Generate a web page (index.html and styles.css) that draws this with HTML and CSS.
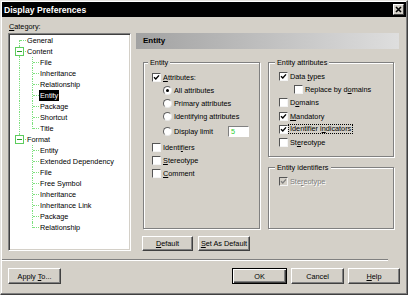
FILE: index.html
```html
<!DOCTYPE html>
<html>
<head>
<meta charset="utf-8">
<title>Display Preferences</title>
<link rel="stylesheet" href="styles.css">
</head>
<body>
<div class="window">
  <div class="titlebar">
    <span class="title">Display Preferences</span>
    <span class="close"><svg width="7" height="7" viewBox="0 0 7 7"><path d="M1 1L6 6M6 1L1 6" stroke="#000" stroke-width="1.6"/></svg></span>
  </div>
  <div class="main">
    <div class="left">
      <div class="label"><u>C</u>ategory:</div>
      <div class="tree">
        <div class="row"><span class="cell first"></span><span class="t">General</span></div>
        <div class="row"><span class="cell tee"><span class="exp"></span></span><span class="t">Content</span></div>
        <div class="row"><span class="cell pipe"></span><span class="cell tee"></span><span class="t">File</span></div>
        <div class="row"><span class="cell pipe"></span><span class="cell tee"></span><span class="t">Inheritance</span></div>
        <div class="row"><span class="cell pipe"></span><span class="cell tee"></span><span class="t">Relationship</span></div>
        <div class="row"><span class="cell pipe"></span><span class="cell tee"></span><span class="t sel">Entity</span></div>
        <div class="row"><span class="cell pipe"></span><span class="cell tee"></span><span class="t">Package</span></div>
        <div class="row"><span class="cell pipe"></span><span class="cell tee"></span><span class="t">Shortcut</span></div>
        <div class="row"><span class="cell pipe"></span><span class="cell elbow"></span><span class="t">Title</span></div>
        <div class="row"><span class="cell elbow"><span class="exp"></span></span><span class="t">Format</span></div>
        <div class="row"><span class="cell"></span><span class="cell tee"></span><span class="t">Entity</span></div>
        <div class="row"><span class="cell"></span><span class="cell tee"></span><span class="t">Extended Dependency</span></div>
        <div class="row"><span class="cell"></span><span class="cell tee"></span><span class="t">File</span></div>
        <div class="row"><span class="cell"></span><span class="cell tee"></span><span class="t">Free Symbol</span></div>
        <div class="row"><span class="cell"></span><span class="cell tee"></span><span class="t">Inheritance</span></div>
        <div class="row"><span class="cell"></span><span class="cell tee"></span><span class="t">Inheritance Link</span></div>
        <div class="row"><span class="cell"></span><span class="cell tee"></span><span class="t">Package</span></div>
        <div class="row"><span class="cell"></span><span class="cell elbow"></span><span class="t">Relationship</span></div>
      </div>
    </div>
    <div class="right">
      <div class="header">Entity</div>
      <div class="groups">
        <div class="group g-entity">
          <div class="legend lg-entity">Entity</div>
          <div class="rows rows-entity">
            <div class="opt lvl1"><span class="cb"><svg width="7" height="7" viewBox="0 0 7 7"><path d="M1 3.2L2.8 5L6 1.4" fill="none" stroke="#000" stroke-width="1.4"/></svg></span><span><u>A</u>ttributes:</span></div>
            <div class="opt lvl2"><span class="rb on"></span><span>All attributes</span></div>
            <div class="opt lvl2"><span class="rb"></span><span>Primary attributes</span></div>
            <div class="opt lvl2"><span class="rb"></span><span>Identifying attributes</span></div>
            <div class="opt lvl2 tall"><span class="rb"></span><span class="dl">Display limit</span><span class="tb">5</span></div>
            <div class="opt lvl1"><span class="cb"></span><span>Identi<u>f</u>iers</span></div>
            <div class="opt lvl1"><span class="cb"></span><span><u>S</u>tereotype</span></div>
            <div class="opt lvl1"><span class="cb"></span><span><u>C</u>omment</span></div>
          </div>
        </div>
        <div class="col2">
          <div class="group g-attr">
            <div class="legend lg-attr">Entity attributes</div>
            <div class="rows rows-attr">
              <div class="opt a1"><span class="cb"><svg width="7" height="7" viewBox="0 0 7 7"><path d="M1 3.2L2.8 5L6 1.4" fill="none" stroke="#000" stroke-width="1.4"/></svg></span><span>Data <u>t</u>ypes</span></div>
              <div class="opt a2"><span class="cb"></span><span>Replace by d<u>o</u>mains</span></div>
              <div class="opt a1"><span class="cb"></span><span>D<u>o</u>mains</span></div>
              <div class="opt a1"><span class="cb"><svg width="7" height="7" viewBox="0 0 7 7"><path d="M1 3.2L2.8 5L6 1.4" fill="none" stroke="#000" stroke-width="1.4"/></svg></span><span><u>M</u>andatory</span></div>
              <div class="opt a1"><span class="cb"><svg width="7" height="7" viewBox="0 0 7 7"><path d="M1 3.2L2.8 5L6 1.4" fill="none" stroke="#000" stroke-width="1.4"/></svg></span><span class="focus">Identifier i<u>n</u>dicators</span></div>
              <div class="opt a1"><span class="cb"></span><span>St<u>e</u>reotype</span></div>
            </div>
          </div>
          <div class="group g-ident">
            <div class="legend lg-attr">Entity identifiers</div>
            <div class="rows rows-ident">
              <div class="opt a1 disabled"><span class="cb dis"><svg width="7" height="7" viewBox="0 0 7 7"><path d="M1 3.2L2.8 5L6 1.4" fill="none" stroke="#808080" stroke-width="1.4"/></svg></span><span>Ste<u>r</u>eotype</span></div>
            </div>
          </div>
        </div>
      </div>
      <div class="btnrow">
        <button class="btn b-default"><span><u>D</u>efault</span></button>
        <button class="btn b-setdef"><span><u>S</u>et As Default</span></button>
      </div>
    </div>
  </div>
  <div class="sep"></div>
  <div class="footer">
    <button class="btn b-apply"><span>Apply <u>T</u>o...</span></button>
    <div class="spacer"></div>
    <button class="btn b-ok"><span>OK</span></button>
    <button class="btn b-cancel"><span>Cancel</span></button>
    <button class="btn b-help"><span><u>H</u>elp</span></button>
  </div>
</div>
</body>
</html>
```

FILE: styles.css
```css
* { box-sizing: border-box; }
html, body { margin: 0; padding: 0; }
body {
  width: 408px;
  height: 295px;
  overflow: hidden;
  background: #d4d0c8;
  font-family: "Liberation Sans", Arial, sans-serif;
  font-size: 7.3px;
  color: #000;
}
u { text-decoration: underline; text-underline-offset: 1px; }

.window {
  width: 408px;
  height: 295px;
  border: 1px solid;
  border-color: #e4e2de #404040 #404040 #e4e2de;
  box-shadow: inset -1px -1px 0 #808080, inset 1px 1px 0 #fff;
  padding: 1px;
  background: #d4d0c8;
  display: flex;
  flex-direction: column;
}

.titlebar {
  height: 15px;
  flex: none;
  background: #000;
  color: #fff;
  display: flex;
  align-items: center;
  justify-content: space-between;
  padding: 0 2px;
}
.title { font-weight: bold; font-size: 8.6px; }
.close {
  width: 11px;
  height: 11px;
  background: #d4d0c8;
  border: 1px solid;
  border-color: #fff #404040 #404040 #fff;
  display: flex;
  align-items: center;
  justify-content: center;
}
.close svg { display: block; }

.main {
  height: 234px;
  flex: none;
  display: flex;
}

.left {
  margin-left: 6px;
  width: 123px;
  display: flex;
  flex-direction: column;
}
.label {
  margin-top: 4px;
  height: 11px;
  line-height: 11px;
  padding-left: 1px;
}
.tree {
  margin-top: 1px;
  height: 218px;
  background: #fff;
  border: 1px solid;
  border-color: #808080 #fff #fff #808080;
  box-shadow: inset 1px 1px 0 #404040, inset -1px -1px 0 #d4d0c8;
  padding: 1px;
}
.row {
  display: flex;
  height: 11px;
  line-height: 11px;
  padding-left: 4px;
  white-space: nowrap;
}
.cell {
  width: 13px;
  height: 11px;
  flex: none;
  position: relative;
}
.cell.pipe::before, .cell.tee::before, .cell.elbow::before, .cell.first::before {
  content: "";
  position: absolute;
  left: 5px;
  top: 0;
  bottom: 0;
  border-left: 1px dotted #7ee07e;
}
.cell.elbow::before { bottom: 5px; }
.cell.first::before { top: 5px; }
.cell.tee::after, .cell.elbow::after, .cell.first::after {
  content: "";
  position: absolute;
  left: 6px;
  top: 5px;
  width: 6px;
  border-top: 1px dotted #7ee07e;
}
.exp {
  position: absolute;
  left: 1px;
  top: 1px;
  width: 9px;
  height: 9px;
  border: 1px solid #5ccc5c;
  background: #fff;
  z-index: 1;
}
.exp::after {
  content: "";
  position: absolute;
  left: 1px;
  top: 3px;
  width: 5px;
  height: 1px;
  background: #2a9a2a;
}
.t {
  margin-left: -1px;
  padding: 0 1px;
  height: 11px;
}
.t.sel { background: #000; color: #fff; }

.right {
  margin-left: 5px;
  width: 263px;
  padding-top: 16px;
  display: flex;
  flex-direction: column;
}
.header {
  height: 16px;
  line-height: 16px;
  padding-left: 7px;
  font-weight: bold;
  font-size: 8px;
  background: linear-gradient(to right, #a2a2a2, #dedede);
}
.groups {
  margin-top: 13px;
  display: flex;
  padding-left: 7px;
  gap: 8px;
}
.group {
  border: 1px solid #808080;
  box-shadow: inset 1px 1px 0 #fff, 1px 1px 0 #fff;
  display: flex;
  flex-direction: column;
}
.legend {
  align-self: flex-start;
  margin-top: -6px;
  height: 11px;
  line-height: 11px;
  padding: 0 2px;
  background: #d4d0c8;
  white-space: nowrap;
}
.lg-entity { margin-left: 4px; }
.lg-attr { margin-left: 6px; }
.g-entity { width: 117px; height: 167px; }
.col2 { width: 126px; display: flex; flex-direction: column; }
.g-attr { height: 95px; }
.g-ident { margin-top: 10px; height: 62px; }

.rows-entity { padding-top: 2.5px; }
.rows-attr { padding-top: 1.4px; }
.rows-ident { padding-top: 1.5px; }

.opt {
  display: flex;
  align-items: center;
  height: 13px;
  white-space: nowrap;
}
.rows-attr .opt { height: 13.33px; }
.opt.tall { height: 18px; }
.lvl1 { padding-left: 8px; }
.lvl2 { padding-left: 19px; }
.a1 { padding-left: 10px; }
.a2 { padding-left: 25px; }

.cb {
  width: 9px;
  height: 9px;
  flex: none;
  margin-right: 2px;
  background: #fff;
  border: 1px solid;
  border-color: #555 #f4f4f4 #f4f4f4 #555;
  display: flex;
  align-items: center;
  justify-content: center;
}
.cb svg { display: block; }
.cb.dis { background: #d4d0c8; }
.rb {
  width: 9px;
  height: 9px;
  flex: none;
  margin-right: 2px;
  border-radius: 50%;
  background: #fff;
  border: 1px solid;
  border-color: #606060 #e8e8e8 #e8e8e8 #606060;
  display: flex;
  align-items: center;
  justify-content: center;
}
.rb.on::after {
  content: "";
  width: 3px;
  height: 3px;
  border-radius: 50%;
  background: #000;
}
.dl { width: 54px; }
.tb {
  width: 21px;
  height: 11px;
  line-height: 9px;
  background: #fff;
  border: 1px solid;
  border-color: #808080 #fff #fff #808080;
  padding-left: 2px;
  color: #2fd02f;
}
.focus {
  border: 1px dotted #000;
  padding: 0 1px;
  margin-left: -2px;
  line-height: 8px;
}
.disabled { color: #808080; text-shadow: 1px 1px 0 #fff; }

.btnrow {
  margin-top: 7px;
  padding-left: 6px;
  display: flex;
  gap: 5px;
}
.btn {
  height: 15px;
  padding: 0;
  margin: 0;
  font: inherit;
  color: #000;
  background: #d4d0c8;
  border: 1px solid;
  border-color: #fff #404040 #404040 #fff;
  box-shadow: inset -1px -1px 0 #808080;
  display: flex;
  align-items: center;
  justify-content: center;
  white-space: nowrap;
}
.b-default { width: 51px; }
.b-setdef { width: 52px; }

.sep {
  margin-top: 8px;
  margin-right: 18px;
  height: 2px;
  flex: none;
  border-top: 1px solid #808080;
  border-bottom: 1px solid #fff;
}
.footer {
  margin-top: 7px;
  padding: 0 6px;
  display: flex;
  align-items: center;
}
.footer .btn { height: 16px; }
.spacer { flex: 1; }
.b-apply { width: 53px; }
.b-ok {
  width: 55px;
  border-color: #000;
  box-shadow: inset 1px 1px 0 #fff, inset -1px -1px 0 #404040, inset -2px -2px 0 #808080;
}
.b-cancel { width: 53px; margin-left: 4px; }
.b-help { width: 52px; margin-left: 4px; }
```
